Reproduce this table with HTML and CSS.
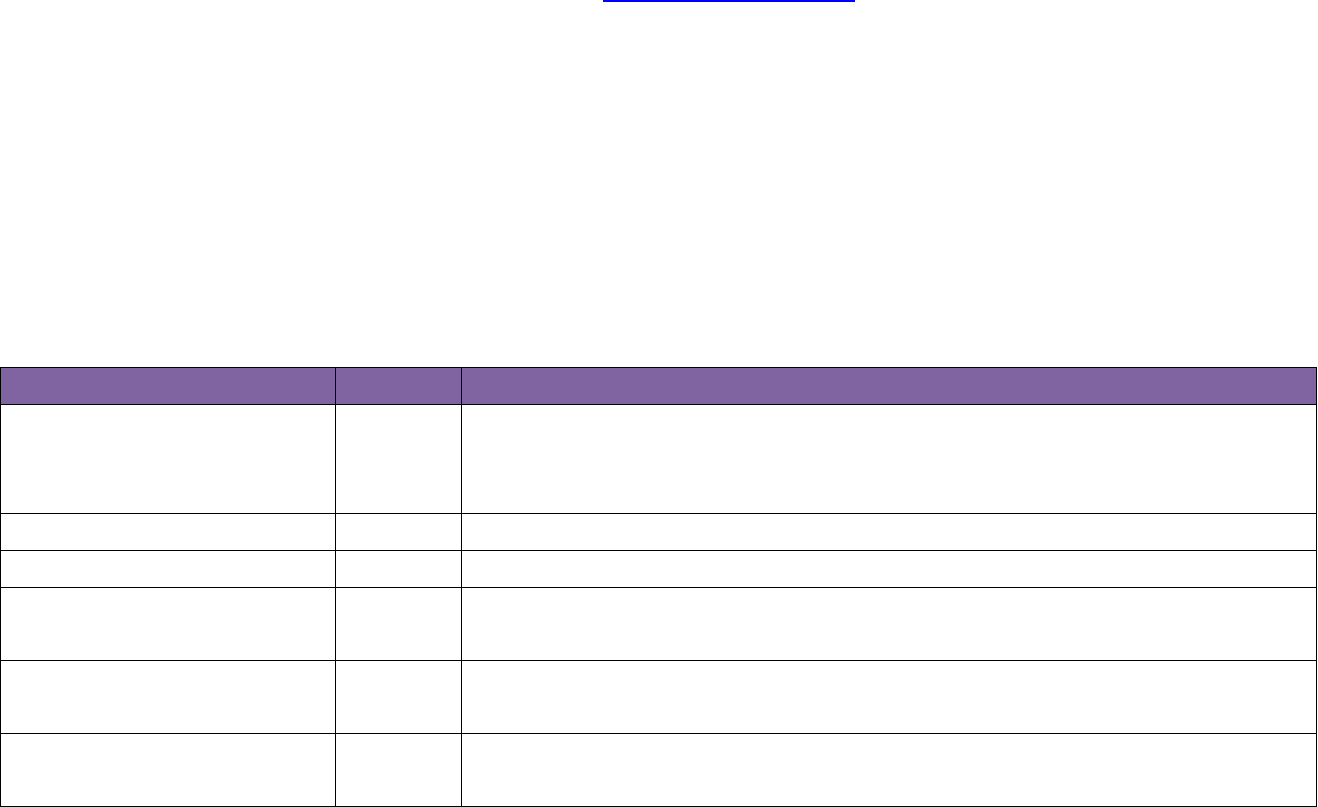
FILE: index.html
```html
<!DOCTYPE html>
<html>
<head>
<meta charset="utf-8">
<link rel="stylesheet" href="styles.css">
</head>
<body>
<div class="top">
  <a class="link" href="#"></a>
</div>
<div class="table">
  <div class="cell head"></div><div class="cell head"></div><div class="cell head"></div>
  <div class="cell"></div><div class="cell"></div><div class="cell"></div>
  <div class="cell"></div><div class="cell"></div><div class="cell"></div>
  <div class="cell"></div><div class="cell"></div><div class="cell"></div>
  <div class="cell"></div><div class="cell"></div><div class="cell"></div>
  <div class="cell"></div><div class="cell"></div><div class="cell"></div>
  <div class="cell"></div><div class="cell"></div><div class="cell"></div>
</div>
</body>
</html>
```
FILE: styles.css
```css
html, body {
  margin: 0;
  padding: 0;
  background: #ffffff;
  font-family: "Liberation Sans", Arial, sans-serif;
}
.top {
  height: 367px;
  padding-left: 603px;
  box-sizing: border-box;
}
.link {
  display: block;
  width: 252px;
  height: 2px;
  background: #0000ff;
}
.table {
  display: grid;
  grid-template-columns: 334px 125px 854px;
  grid-template-rows: 36px 108px 36px 36px 72px 72px 72px;
  gap: 1px;
  padding: 1px;
  background: #000000;
  width: 1317px;
  box-sizing: border-box;
}
.cell {
  background: #ffffff;
}
.cell.head {
  background: #8064a2;
}
```
